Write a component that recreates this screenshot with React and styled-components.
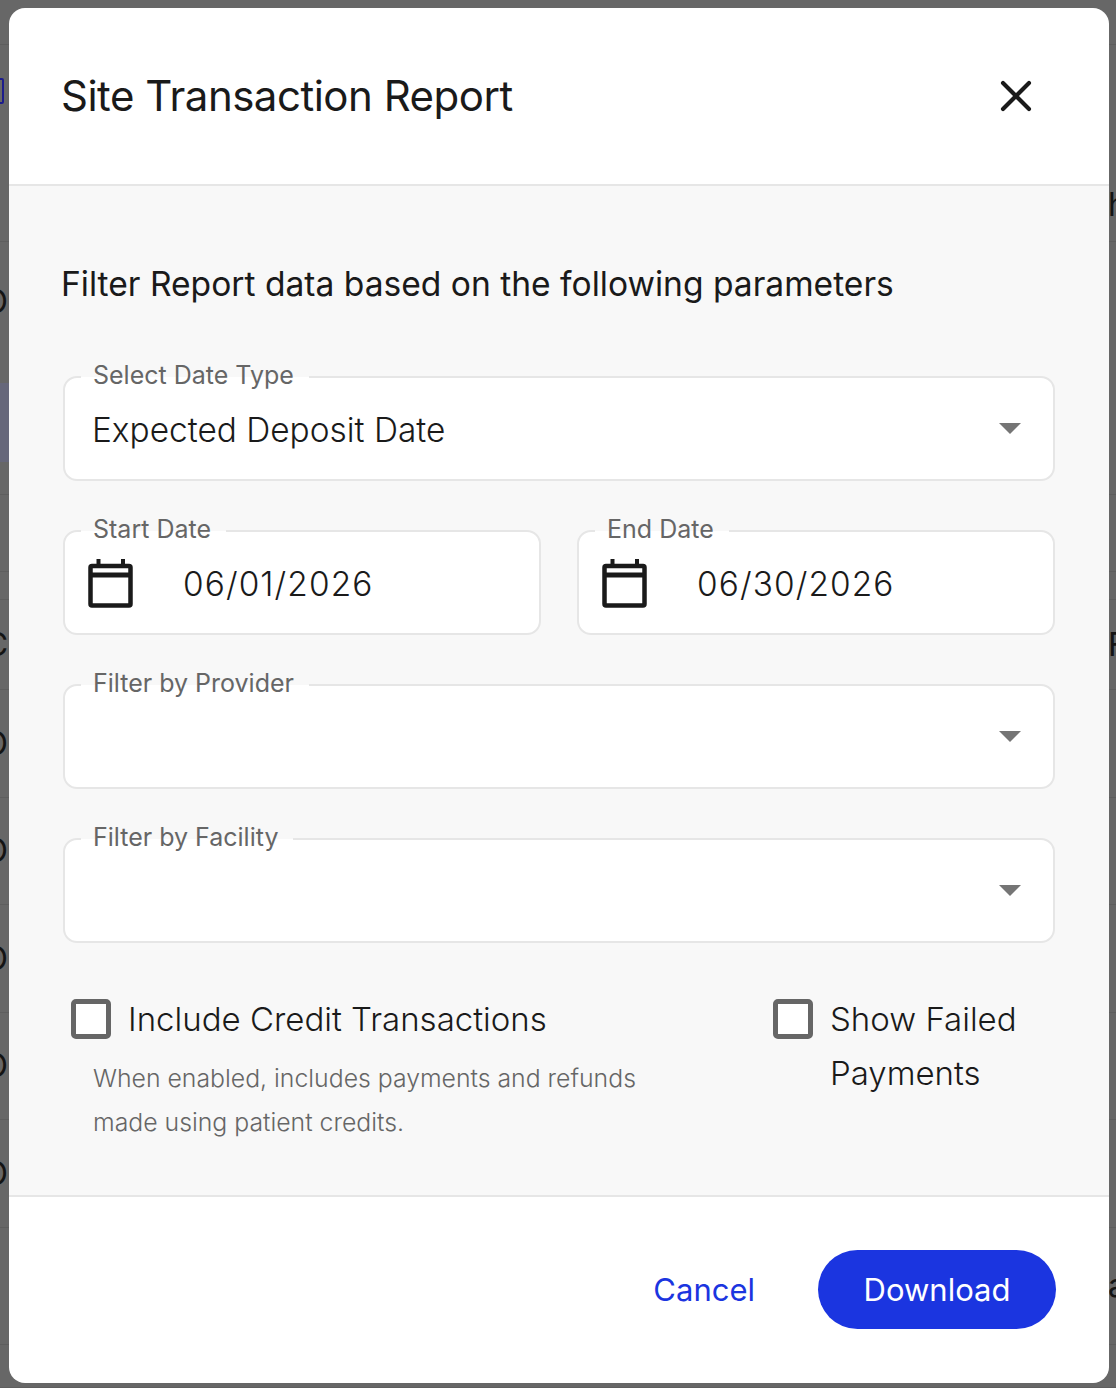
import React from "react";
import styled, { createGlobalStyle } from "styled-components";
import { X } from "lucide-react";

const GlobalStyle = createGlobalStyle`
  html, body { margin: 0; padding: 0; }
  body { font-family: "Inter", "Liberation Sans", sans-serif; color: #1a1a1a; }
  * { box-sizing: border-box; }
`;

const Page = styled.div`
  position: relative;
  width: 1116px;
  height: 1388px;
  overflow: hidden;
  background: #676767;
  padding: 8px 7px 5px 9px;
`;

/* the table that peeks out on both sides of the dialog */
const Behind = styled.div`
  position: absolute;
  inset: 0;
  display: flex;
  flex-direction: column;
`;

const BehindRow = styled.div`
  height: ${(p) => p.$h}px;
  flex: none;
  display: flex;
  justify-content: space-between;
  align-items: center;
  border-bottom: ${(p) => (p.$plain ? "0" : "1px solid #5e5e5e")};
  font-size: 32px;
  line-height: 1;
  color: #141414;
  overflow: hidden;
`;

const PeekLeft = styled.span`
  margin-left: -18px;
  width: 26px;
  text-align: right;
`;

const PeekRight = styled.span`
  margin-right: -18px;
  width: 26px;
`;

const RowTint = styled.div`
  position: absolute;
  left: 0;
  top: 383px;
  width: 9px;
  height: 79px;
  background: #66677a;
`;

const BlueMark = styled.div`
  position: absolute;
  left: -6px;
  top: 78px;
  width: 10px;
  height: 26px;
  border: 2px solid #1c1c8c;
  border-radius: 2px;
`;

const Modal = styled.div`
  position: relative;
  height: 100%;
  display: flex;
  flex-direction: column;
  background: #fff;
  border-radius: 16px;
  overflow: hidden;
`;

const Header = styled.header`
  height: 178px;
  flex: none;
  display: flex;
  align-items: center;
  justify-content: space-between;
  padding: 0 67px 0 52px;
  border-bottom: 2px solid #e6e6e6;
`;

const Title = styled.h2`
  margin: 0;
  font-size: 42px;
  line-height: 1;
  font-weight: 400;
  letter-spacing: -0.5px;
  color: #1a1a1a;
`;

const CloseButton = styled.button`
  border: 0;
  background: none;
  padding: 0;
  display: flex;
  color: #1a1a1a;
`;

const Body = styled.div`
  flex: 1;
  display: flex;
  flex-direction: column;
  background: #f8f8f8;
  padding: 76px 54px 0 54px;
`;

const Intro = styled.p`
  margin: 0 0 70px -2px;
  font-size: 33.6px;
  line-height: 44px;
  font-weight: 400;
  color: #1a1a1a;
`;

const Fields = styled.div`
  display: flex;
  flex-direction: column;
  gap: 49px;
`;

const DateRow = styled.div`
  display: grid;
  grid-template-columns: 478px 478px;
  justify-content: space-between;
`;

const Field = styled.div`
  position: relative;
  height: 105px;
  padding: 0 32px 0 27px;
  display: flex;
  align-items: center;
  justify-content: space-between;
  background: #fff;
  border: 2px solid #e6e6e6;
  border-radius: 14px;
`;

const Legend = styled.span`
  position: absolute;
  top: -19px;
  left: 16px;
  padding: 0 15px 0 12px;
  font-size: 25px;
  line-height: 32px;
  color: #666;
  background: linear-gradient(#f8f8f8 55%, #fff 55%);
`;

const Value = styled.span`
  margin-top: 3px;
  font-size: 33.4px;
  line-height: 44px;
  font-weight: 300;
  color: #1a1a1a;
`;

const DateValue = styled(Value)`
  margin-top: 2px;
  margin-left: 50px;
  letter-spacing: 1.1px;
`;

const DateInner = styled.div`
  display: flex;
  align-items: center;
  margin-left: -4px;
`;

const Caret = styled.span`
  width: 0;
  height: 0;
  border-left: 11.5px solid transparent;
  border-right: 11.5px solid transparent;
  border-top: 11px solid #757575;
`;

const Options = styled.div`
  display: flex;
  justify-content: space-between;
  margin-top: 49px;
  padding-left: 8px;
`;

const Option = styled.div`
  width: ${(p) => p.$w}px;
`;

const CheckRow = styled.label`
  display: flex;
  align-items: flex-start;
  gap: 17px;
  font-size: 33px;
  line-height: 54px;
  font-weight: 300;
  color: #1a1a1a;
`;

const Box = styled.span`
  flex: none;
  width: 40px;
  height: 40px;
  margin-top: 7px;
  background: #fff;
  border: 5px solid #666;
  border-radius: 5px;
`;

const Hint = styled.p`
  margin: 10px 0 0 22px;
  font-size: 24.8px;
  line-height: 44px;
  font-weight: 300;
  color: #666;
`;

const Footer = styled.footer`
  height: 188px;
  flex: none;
  display: flex;
  align-items: center;
  justify-content: flex-end;
  gap: 63px;
  padding: 0 53px 1px 0;
  border-top: 2px solid #e6e6e6;
`;

const CancelButton = styled.button`
  border: 0;
  background: none;
  padding: 0;
  font: inherit;
  font-size: 31px;
  color: #1b35e0;
`;

const DownloadButton = styled.button`
  width: 238px;
  height: 79px;
  border: 0;
  border-radius: 40px;
  background: #1b35e0;
  font: inherit;
  font-size: 31px;
  color: #fff;
`;

const CalendarIcon = () => (
  <svg width="45" height="50" viewBox="0 0 45 50" fill="none" stroke="#1a1a1a" strokeWidth="4.5" strokeLinejoin="round">
    <rect x="2.5" y="8" width="40" height="39.5" rx="1.5" />
    <path d="M2.5 17h40" strokeWidth="5" />
    <path d="M10.5 1v7M35 1v7" strokeWidth="4" />
  </svg>
);

const behindRows = [
  { h: 45 },
  { h: 123, plain: true },
  { h: 74, right: "h" },
  { h: 120, plain: true, left: "O" },
  { h: 133 },
  { h: 77 },
  { h: 28 },
  { h: 90, left: "C", right: "F" },
  { h: 108, left: "O" },
  { h: 107, left: "O" },
  { h: 108, left: "O" },
  { h: 107, left: "O" },
  { h: 108, left: "O" },
  { h: 117, right: "a" },
  { h: 43 },
];

const SelectField = ({ label, value }) => (
  <Field>
    <Legend>{label}</Legend>
    <Value>{value}</Value>
    <Caret />
  </Field>
);

const DateField = ({ label, value }) => (
  <Field>
    <Legend>{label}</Legend>
    <DateInner>
      <CalendarIcon />
      <DateValue>{value}</DateValue>
    </DateInner>
  </Field>
);

export default function App() {
  return (
    <Page>
      <GlobalStyle />
      <Behind>
        {behindRows.map((row, i) => (
          <BehindRow key={i} $h={row.h} $plain={row.plain}>
            <PeekLeft>{row.left}</PeekLeft>
            <PeekRight>{row.right}</PeekRight>
          </BehindRow>
        ))}
      </Behind>
      <RowTint />
      <BlueMark />
      <Modal>
        <Header>
          <Title>Site Transaction Report</Title>
          <CloseButton><X size={52} strokeWidth={1.9} /></CloseButton>
        </Header>
        <Body>
          <Intro>Filter Report data based on the following parameters</Intro>
          <Fields>
            <SelectField label="Select Date Type" value="Expected Deposit Date" />
            <DateRow>
              <DateField label="Start Date" value="06/01/2026" />
              <DateField label="End Date" value="06/30/2026" />
            </DateRow>
            <SelectField label="Filter by Provider" />
            <SelectField label="Filter by Facility" />
          </Fields>
          <Options>
            <Option $w={580}>
              <CheckRow><Box />Include Credit Transactions</CheckRow>
              <Hint>When enabled, includes payments and refunds made using patient credits.</Hint>
            </Option>
            <Option $w={282}>
              <CheckRow><Box />Show Failed Payments</CheckRow>
            </Option>
          </Options>
        </Body>
        <Footer>
          <CancelButton>Cancel</CancelButton>
          <DownloadButton>Download</DownloadButton>
        </Footer>
      </Modal>
    </Page>
  );
}
